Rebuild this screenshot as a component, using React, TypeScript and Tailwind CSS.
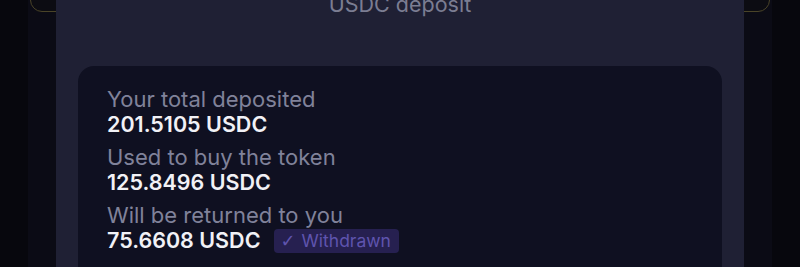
import React from "react";

export default function App() {
  const font = { fontFamily: "Inter, 'Noto Sans', sans-serif" };
  return (
    <div
      className="relative w-[800px] h-[267px] overflow-hidden bg-[#07070d]"
      style={font}
    >
      {/* background column behind modal */}
      <div className="absolute left-[28px] right-[28px] top-0 bottom-0 bg-[#0b0b15]" />
      {/* yellow-bordered card edge at top */}
      <div className="absolute left-[30px] right-[30px] top-[-40px] h-[52px] rounded-[12px] border border-[#4a4428] bg-[#0c0c12]" />

      {/* modal */}
      <div className="relative mx-[56px] h-full bg-[#1f2034] flex flex-col">
        <div className="mt-[-10px] text-center text-[21.5px] leading-[28px] text-[#7b7d92]">
          USDC deposit
        </div>
        <div className="mx-[22px] mt-[48px] flex-1 rounded-t-[16px] bg-[#0f1021] pl-[29px] pt-[21px] flex flex-col gap-[8px]">
          <div className="flex flex-col">
            <div className="text-[22px] leading-[25px] text-[#80829a]">Your total deposited</div>
            <div className="text-[21.5px] leading-[25px] font-semibold text-[#f1f1f6]">201.5105 USDC</div>
          </div>
          <div className="flex flex-col">
            <div className="text-[22px] leading-[25px] text-[#80829a]">Used to buy the token</div>
            <div className="text-[21.5px] leading-[25px] font-semibold text-[#f1f1f6]">125.8496 USDC</div>
          </div>
          <div className="flex flex-col">
            <div className="text-[22px] leading-[25px] text-[#80829a]">Will be returned to you</div>
            <div className="flex items-center gap-[14px]">
              <div className="text-[21.5px] leading-[25px] font-semibold text-[#f1f1f6]">75.6608 USDC</div>
              <div className="flex items-center h-[24px] pl-[6px] pr-[8px] rounded-[4px] bg-[#262050] text-[17.5px] leading-[24px] text-[#5f54ae]">
                <span className="mr-[6px] text-[18px]" style={{ fontFamily: "'DejaVu Sans', sans-serif" }}>✓</span>Withdrawn
              </div>
            </div>
          </div>
        </div>
      </div>
    </div>
  );
}
